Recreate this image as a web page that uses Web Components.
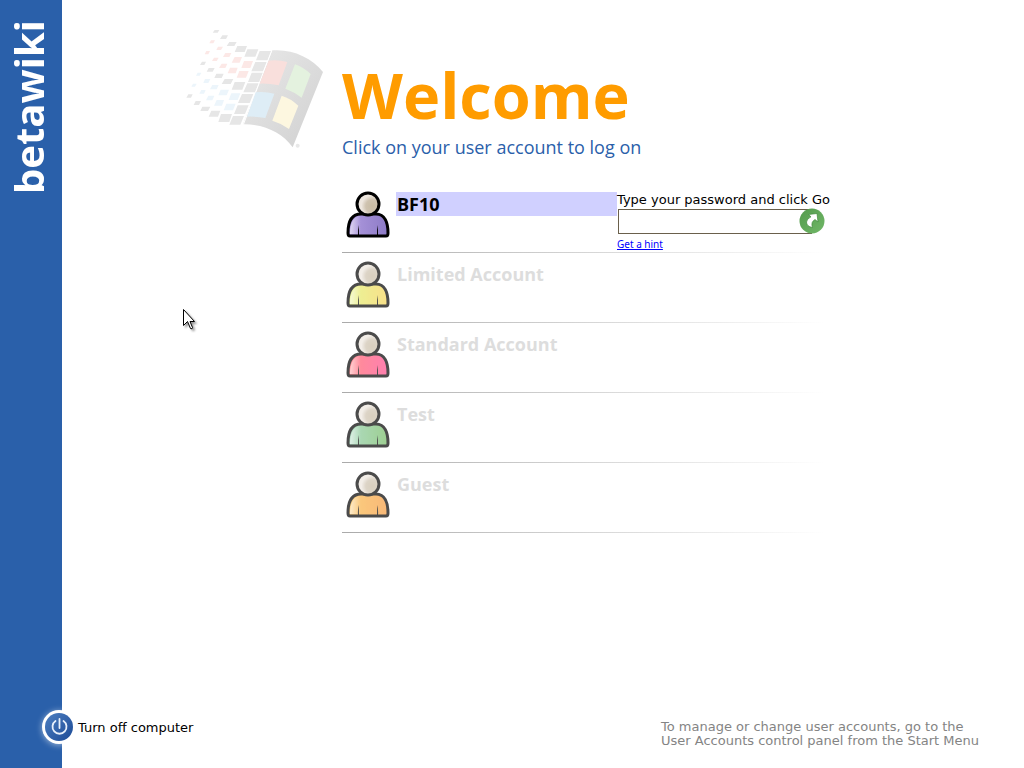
<!DOCTYPE html>
<html lang="en">
<head>
<meta charset="utf-8">
<title>Welcome</title>
<style>
html, body { margin: 0; height: 100%; background: #fff; }
body { font-family: "DejaVu Sans", Verdana, sans-serif; font-size: 13px; }
</style>
</head>
<body>
<logon-screen></logon-screen>

<template id="t-screen">
<style>
:host { display: grid; grid-template-columns: 62px 1fr; min-height: 100vh; position: relative; overflow: hidden; }
main { display: flex; flex-direction: column; min-width: 0; }
.accounts { padding: 23px 20px 0 280px; }
mouse-pointer { position: absolute; left: 182px; top: 308px; }
</style>
<brand-rail>betawiki</brand-rail>
<main>
  <welcome-header>
    <span slot="title">Welcome</span>
    <span slot="tagline">Click on your user account to log on</span>
  </welcome-header>
  <section class="accounts" aria-label="User accounts">
    <account-row selected style="--a:#b09bdf;--b:#8c7ac6">BF10<password-form slot="extra"></password-form></account-row>
    <account-row style="--a:#dff06c;--b:#f7d457">Limited Account</account-row>
    <account-row style="--a:#ff6066;--b:#ff4a8e">Standard Account</account-row>
    <account-row style="--a:#8fcdaa;--b:#74bb63">Test</account-row>
    <account-row style="--a:#fabb48;--b:#f69a3e">Guest</account-row>
  </section>
  <page-footer></page-footer>
</main>
<mouse-pointer></mouse-pointer>
</template>

<template id="t-rail">
<style>
:host { display: flex; justify-content: center; background: #2a60aa; color: #fff; padding: 20px 4px 0 0; }
span { writing-mode: vertical-rl; transform: rotate(180deg); align-self: flex-start; font: 700 40px/56px "Open Sans", "Noto Sans", sans-serif; }
</style>
<span><slot></slot></span>
</template>

<template id="t-header">
<style>
:host { display: flex; gap: 7px; padding: 20px 20px 0 113px; }
svg { flex: none; width: 160px; height: 140px; }
.text { padding-top: 33px; }
h1 { margin: 0; color: #ff9c00; font: 700 63px/84px "Open Sans", "Noto Sans", sans-serif; }
p { margin: 0; color: #2a60aa; font: 500 18px/20px "Open Sans", "Noto Sans", sans-serif; white-space: nowrap; }
</style>
<svg viewBox="0 0 480 420" aria-hidden="true">
  <defs><linearGradient id="frame" x1="0" y1="0" x2="1" y2="1"><stop offset="0" stop-color="#e9e9e9"/><stop offset="1" stop-color="#d0d0d0"/></linearGradient></defs>
  <path fill="url(#frame)" d="M292 91C350 86 410 112 444 156L353 382C322 338 268 312 204 313Z"/>
  <g fill="#e6e6e6">
    <path d="M254 93h35l-11 28h-35zM241 126h34l-11 28h-35zM230 158h35l-11 28h-35zM217 190h34l-11 27h-35zM201 222h34l-11 27h-35zM188 256h33l-11 26h-33zM174 288h33l-11 26h-33z"/>
    <path d="M217 88h33l-9 22h-33zM187 78h29l-7 18h-30zM163 66h22l-7 12h-23zM142 46h17l-6 11h-18zM119 30h14l-5 8h-15zM179 186h32l-9 23h-32zM149 177h26l-8 15h-27zM124 161h22l-6 13h-22zM101 144h18l-6 11h-18zM81 125h12l-5 10h-13z"/>
    <path d="M138 282h33l-8 24h-33zM109 272h27l-7 18h-28zM82 260h24l-7 13h-23zM62 243h16l-6 12h-16zM40 223h13l-5 10h-14z"/>
  </g>
  <g fill="#fce8e6">
    <path d="M207 123h27l-8 21h-27zM179 111h22l-7 17h-24zM151 99h18l-6 12h-19zM129 80h15l-6 10h-14zM108 61h12l-5 9h-12zM193 153h28l-8 20h-28zM165 143h23l-6 17h-24zM140 131h17l-6 13h-19zM117 113h14l-6 10h-14zM94 93h11l-5 10h-11z"/>
  </g>
  <g fill="#ecf5fb">
    <path d="M169 220h27l-8 20h-27zM137 209h25l-7 17h-25zM112 195h19l-6 13h-20zM90 177h16l-6 12h-15zM68 158h11l-5 9h-11zM154 251h28l-8 20h-28zM125 240h22l-6 17h-24zM100 227h18l-6 14h-19zM79 210h13l-5 11h-14zM54 191h11l-5 9h-11z"/>
  </g>
  <path fill="none" stroke="#fff" stroke-width="3" d="M290 92L205 314"/>
  <path fill="#f9dfdc" d="M281 122Q310 119 337 126L311 196Q282 190 254 191Z"/>
  <path fill="#e4f2df" d="M360 133Q387 143 407 162L380 233Q356 215 331 206Z"/>
  <path fill="#deedf6" d="M242 217Q270 214 298 221L271 294Q244 289 216 290Z"/>
  <path fill="#fdf7e0" d="M320 227Q347 235 370 257L342 327Q317 309 292 302Z"/>
  <circle cx="368" cy="377" r="6" fill="#e8e8e8"/>
</svg>
<div class="text"><h1><slot name="title"></slot></h1><p><slot name="tagline"></slot></p></div>
</template>

<template id="t-row">
<style>
:host { display: grid; grid-template-columns: 54px 221px 1fr; height: 69px; border-bottom: 1px solid; border-image: linear-gradient(90deg, #aaa, #fff) 1; max-width: 482px; }
svg { width: 52px; height: 60px; opacity: .7; }
:host([selected]) svg { opacity: 1; }
button { align-self: start; margin: 9px 0 0; border: 0; padding: 0 1px; text-align: left; background: none; color: #ddd; font: 700 18px/24px "Open Sans", "Noto Sans", sans-serif; }
:host([selected]) button { background: #d0d0ff; color: #000; }
</style>
<svg viewBox="0 0 52 60" aria-hidden="true">
  <defs>
    <linearGradient id="body"><stop offset="0" stop-color="#fff" stop-opacity=".6"/><stop offset=".3" stop-color="#fff" stop-opacity="0"/></linearGradient>
    <linearGradient id="shirt"><stop offset="0" style="stop-color:var(--a)"/><stop offset="1" style="stop-color:var(--b)"/></linearGradient>
    <radialGradient id="head" cx=".7" cy=".6"><stop offset="0" stop-color="#c8bba3"/><stop offset=".6" stop-color="#cfc3b0"/><stop offset="1" stop-color="#eee7df"/></radialGradient>
  </defs>
  <path d="M6 50C6 40 9 31 19 31H34C43 31 46 40 46 50Q46 53 44 53H8Q6 53 6 50Z" fill="url(#shirt)" stroke="#000" stroke-width="3"/>
  <path d="M8 51C8 41 11 33 19 33H34C41 33 44 41 44 51Z" fill="url(#body)"/>
  <circle cx="26" cy="21" r="11" fill="url(#head)" stroke="#000" stroke-width="3"/>
  <path d="M16 52Q15.500 47 17 42Q16.800 47 17 52ZM36 52Q36.500 47 35 42Q35.200 47 35 52Z" fill="#000"/>
</svg>
<button type="button"><slot></slot></button>
<slot name="extra"></slot>
</template>

<template id="t-password">
<style>
:host { display: block; padding-top: 9px; white-space: nowrap; }
form { margin: 0; }
label { display: block; line-height: 16px; color: #000; }
.field { display: flex; align-items: center; margin-left: 1px; }
input { box-sizing: border-box; width: 194px; height: 25px; margin: 1px 0 0; border: 1px solid #6a604c; padding: 0 16px 0 4px; font: inherit; outline: 0; background: #fff; }
button { flex: none; width: 26px; height: 26px; margin: 0 0 0 -13px; border: 0; padding: 0; background: none; }
button svg { display: block; }
a { display: block; width: max-content; color: #00f; font: 10px/16px "Noto Sans", "Open Sans", sans-serif; margin-top: 2px; }
</style>
<form onsubmit="return false">
  <label for="pw">Type your password and click Go</label>
  <div class="field">
    <input id="pw" type="password">
    <button type="submit" aria-label="Go">
      <svg width="26" height="26" viewBox="0 0 26 26"><defs><linearGradient id="go" x1="0" y1="0" x2="1" y2="1"><stop offset="0" stop-color="#539a4c"/><stop offset="1" stop-color="#71b868"/></linearGradient></defs><circle cx="13" cy="13" r="12.5" fill="url(#go)"/><path d="M9.500 6.500L18 5.500L19 14L16 11.500Q11.500 14 13.500 19.500Q7.500 18.500 7.500 14Q8 10.500 12 8.800Z" fill="#fff" stroke="#3f8a3b" stroke-width=".7" stroke-linejoin="round"/></svg>
    </button>
  </div>
  <a href="#hint">Get a hint</a>
</form>
</template>

<template id="t-footer">
<style>
:host { display: flex; justify-content: space-between; align-items: flex-start; margin-top: auto; padding: 0 45px 20px 0; }
button { display: flex; align-items: center; gap: 2px; margin: -12px 0 0 -22px; border: 0; padding: 0; background: none; font: inherit; color: #000; }
svg { display: block; overflow: visible; filter: drop-shadow(0 1px 3px #fff8); }
p { margin: 0; color: #848484; line-height: 14px; }
</style>
<button type="button">
  <svg width="36" height="38" viewBox="0 0 36 38" aria-hidden="true"><defs><linearGradient id="pw" x1="0" y1="0" x2="1" y2="1"><stop offset="0" stop-color="#4d7fc1"/><stop offset="1" stop-color="#1c4a96"/></linearGradient></defs><circle cx="19" cy="19" r="17" fill="#fff"/><circle cx="19" cy="19" r="14" fill="url(#pw)"/><path d="M15.500 13A7 7 0 1 0 23.500 13M19.500 11V20" fill="none" stroke="#e8f0fb" stroke-width="1.8" stroke-linecap="round"/></svg>
  <span>Turn off computer</span>
</button>
<p>To manage or change user accounts, go to the<br>User Accounts control panel from the Start Menu</p>
</template>

<template id="t-pointer">
<style>:host { display: block; pointer-events: none; } svg { display: block; filter: drop-shadow(2px 2px 1px #0006); }</style>
<svg width="18" height="24" viewBox="0 0 18 24" aria-hidden="true"><path d="M1.500 1.500V17.500L5.500 13.500L8.500 20.500Q10.500 21.500 10.500 19.500L8 13.500H12.500Z" fill="#fff" stroke="#000"/></svg>
</template>

<script>
const define = (name, id) => customElements.define(name, class extends HTMLElement {
  constructor() {
    super();
    this.attachShadow({ mode: "open" }).append(document.getElementById(id).content.cloneNode(true));
  }
});
define("brand-rail", "t-rail");
define("welcome-header", "t-header");
define("account-row", "t-row");
define("password-form", "t-password");
define("page-footer", "t-footer");
define("mouse-pointer", "t-pointer");
define("logon-screen", "t-screen");
</script>
</body>
</html>
